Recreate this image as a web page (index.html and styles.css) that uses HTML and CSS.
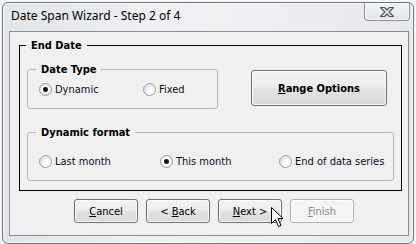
FILE: index.html
```html
<!DOCTYPE html>
<html lang="en">
<head>
  <meta charset="UTF-8">
  <title>Date Span Wizard - Step 2 of 4</title>
  <link rel="stylesheet" href="styles.css">
</head>
<body>
  <div class="window">
    <div class="titlebar">
      <span class="title">Date Span Wizard - Step 2 of 4</span>
      <button class="close-btn" aria-label="Close">
        <svg width="16" height="12" viewBox="0 0 16 12">
          <path d="M1.5 1.5 H5.5 L8 4 L10.5 1.5 H14.5 L10 6 L14.5 10.5 H10.5 L8 8 L5.5 10.5 H1.5 L6 6 Z" fill="#eef0f3" stroke="#4d5360" stroke-width="1.2" stroke-linejoin="round"/>
        </svg>
      </button>
    </div>

    <div class="client">
      <fieldset class="end-date">
        <legend>End Date</legend>

        <div class="top-row">
          <fieldset class="group date-type">
            <legend>Date Type</legend>
            <div class="radio-row">
              <label class="radio w-104"><input type="radio" name="dtype" checked>Dynamic</label>
              <label class="radio"><input type="radio" name="dtype">Fixed</label>
            </div>
          </fieldset>
          <button class="btn range-btn"><u>R</u>ange Options</button>
        </div>

        <fieldset class="group dyn-format">
          <legend>Dynamic format</legend>
          <div class="radio-row">
            <label class="radio w-121"><input type="radio" name="dfmt">Last month</label>
            <label class="radio w-119"><input type="radio" name="dfmt" checked>This month</label>
            <label class="radio"><input type="radio" name="dfmt">End of data series</label>
          </div>
        </fieldset>
      </fieldset>

      <div class="actions">
        <button class="btn"><u>C</u>ancel</button>
        <button class="btn">&lt; <u>B</u>ack</button>
        <button class="btn"><u>N</u>ext &gt;</button>
        <button class="btn" disabled><u>F</u>inish</button>
      </div>
    </div>
  </div>

  <!-- mouse pointer over the Next button -->
  <svg class="cursor" width="13" height="21" viewBox="0 0 13 21">
    <path d="M0.5 0.5 V16.5 L4.5 12.5 L7.5 19.5 L10 18.5 L7 11.5 H12 Z" fill="#fff" stroke="#000" stroke-width="1" stroke-linejoin="miter"/>
  </svg>
</body>
</html>
```

FILE: styles.css
```css
* { box-sizing: border-box; }
body {
  margin: 0;
  width: 416px;
  height: 244px;
  overflow: hidden;
  position: relative;
  background: #f4f5f6;
  font-family: "DejaVu Sans Condensed", "DejaVu Sans", sans-serif;
  font-size: 11px;
  color: #000;
}
.window {
  margin: 2px 2px 0 2px;
  height: 242px;
  padding: 0 4px 0 6px;
  border: 1px solid #6f757b;
  border-radius: 6px;
  background: linear-gradient(to right, #e2e5e9, #f0f1f3 45%, #e6e8eb);
  box-shadow: inset 0 0 0 1px rgba(255, 255, 255, 0.7);
}
.titlebar {
  height: 28px;
  display: flex;
  justify-content: space-between;
  align-items: flex-start;
}
.title {
  margin-top: 5px;
  padding-left: 2px;
  font-family: "Noto Sans", sans-serif;
  font-size: 12px;
  line-height: 15px;
  color: #000;
}
.close-btn {
  width: 46px;
  height: 18px;
  margin-right: -1px;
  padding: 0;
  border: 1px solid #8d9298;
  border-top: none;
  border-radius: 0 0 4px 4px;
  background: linear-gradient(#f1f2f4, #e2e5e9);
  box-shadow: inset 0 0 0 1px rgba(255, 255, 255, 0.6);
  display: flex;
  align-items: center;
  justify-content: center;
}
.client {
  height: 205px;
  border: 1px solid #8b8f93;
  background: #f0f0f0;
}
.end-date {
  margin: 7px 6px 0 9px;
  padding: 0 0 9px 0;
  border: 1px solid #000;
  min-width: 0;
}
legend {
  padding: 0 5px;
  line-height: 13px;
  font-weight: bold;
}
.end-date > legend { margin-left: 6px; }
.top-row {
  display: flex;
  justify-content: space-between;
  align-items: flex-start;
  margin-top: 11px;
  padding: 0 14px 0 7px;
}
.group {
  margin: 0;
  padding: 0;
  border: 1px solid #b4b6b8;
  border-radius: 3px;
  min-width: 0;
}
.group > legend { margin-left: 8px; }
.date-type {
  width: 191px;
  padding: 7px 0 12px 0;
}
.dyn-format {
  margin: 17px 7px 0 7px;
  padding: 16px 0 12px 0;
}
.radio-row {
  display: flex;
  align-items: center;
  height: 13px;
  padding-left: 11px;
}
.radio {
  display: flex;
  align-items: center;
  gap: 3px;
  line-height: 13px;
  color: #0c0c1e;
}
.w-104 { width: 104px; }
.w-121 { width: 121px; }
.w-119 { width: 119px; }
.radio input {
  appearance: none;
  -webkit-appearance: none;
  width: 13px;
  height: 13px;
  margin: 0;
  border: 1px solid #979a9e;
  border-radius: 50%;
  background: radial-gradient(circle at 65% 65%, #ffffff 0 3px, #e3e5e8 6px);
}
.radio input:checked {
  background: radial-gradient(circle, #111 0 1.8px, #5a5a5a 2.4px, #ffffff 3px, #e3e5e8 6px);
}
.btn {
  width: 64px;
  height: 24px;
  padding: 0;
  border: 1px solid #707070;
  border-radius: 3px;
  background: linear-gradient(#f3f3f3, #ececec 50%, #e2e2e2 52%, #dadada);
  box-shadow: inset 0 0 0 1px rgba(255, 255, 255, 0.75);
  font-family: inherit;
  font-size: 11px;
  color: #000;
}
.btn:disabled {
  border-color: #adb2b5;
  background: #f4f4f4;
  color: #8d8d8d;
}
.range-btn {
  width: 136px;
  height: 36px;
  margin-top: 7px;
  font-weight: bold;
}
.actions {
  display: flex;
  gap: 8px;
  margin-top: 8px;
  padding-left: 64px;
}
.cursor {
  position: absolute;
  left: 271px;
  top: 207px;
}
```
